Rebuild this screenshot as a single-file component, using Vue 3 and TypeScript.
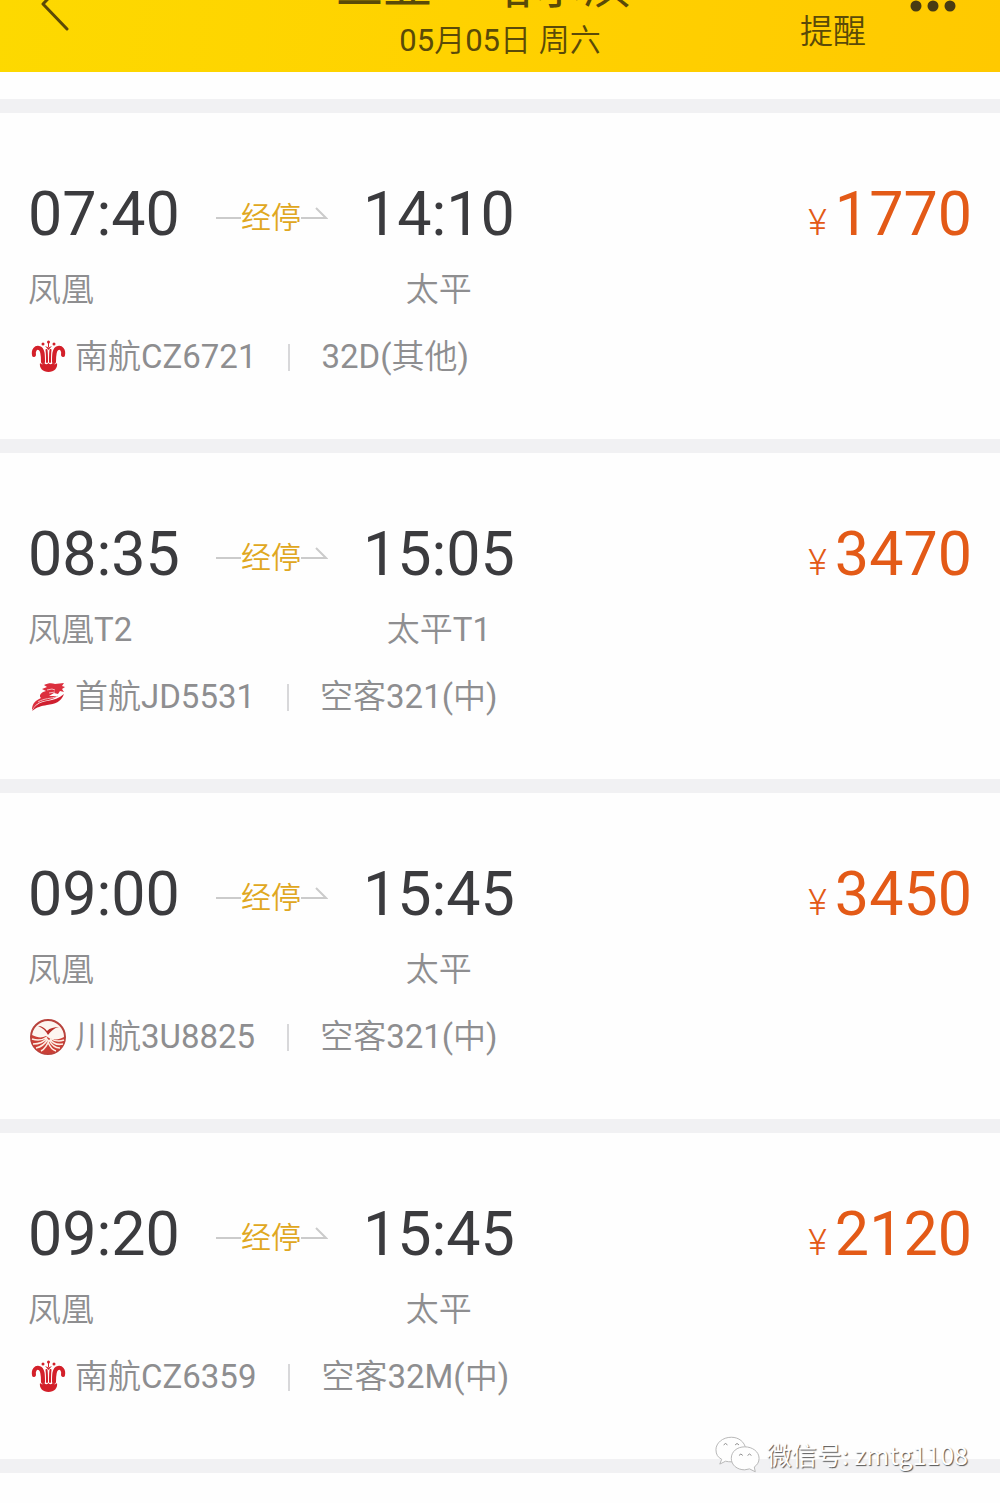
<script setup lang="ts">
type Airline = 'southern' | 'capital' | 'sichuan'

interface Flight {
  depart: string
  arrive: string
  from: string
  to: string
  airline: Airline
  code: string
  plane: string
  price: number
}

const flights: Flight[] = [
  { depart: '07:40', arrive: '14:10', from: '凤凰', to: '太平', airline: 'southern', code: '南航CZ6721', plane: '32D(其他)', price: 1770 },
  { depart: '08:35', arrive: '15:05', from: '凤凰T2', to: '太平T1', airline: 'capital', code: '首航JD5531', plane: '空客321(中)', price: 3470 },
  { depart: '09:00', arrive: '15:45', from: '凤凰', to: '太平', airline: 'sichuan', code: '川航3U8825', plane: '空客321(中)', price: 3450 },
  { depart: '09:20', arrive: '15:45', from: '凤凰', to: '太平', airline: 'southern', code: '南航CZ6359', plane: '空客32M(中)', price: 2120 },
]
</script>

<template>
  <div class="page">
    <header class="bar">
      <button class="back" type="button" aria-label="返回">
        <svg width="32" height="56" viewBox="0 0 32 56" fill="none" stroke="#5c4a06" stroke-width="3" stroke-linecap="round" stroke-linejoin="round">
          <path d="M28 3 4 28l24 25" />
        </svg>
      </button>
      <div class="heading">
        <h1 class="route"><span>三亚</span><span>哈尔滨</span></h1>
        <p class="date">05月05日 周六</p>
      </div>
      <div class="actions">
        <button class="remind" type="button"><span>低价</span><span>提醒</span></button>
        <button class="more" type="button" aria-label="更多">
          <svg width="46" height="12" viewBox="0 0 46 12" fill="#493c12">
            <circle cx="6" cy="6" r="5.5" /><circle cx="23" cy="6" r="5.5" /><circle cx="40" cy="6" r="5.5" />
          </svg>
        </button>
      </div>
    </header>

    <main class="list">
      <article v-for="f in flights" :key="f.code" class="card">
        <div class="summary">
          <div class="times">
            <time class="clock">{{ f.depart }}</time>
            <div class="stopover">
              <i class="dash"></i>
              <span>经停</span>
              <svg width="27" height="14" viewBox="0 0 27 14" fill="none" stroke="#cbcbcb" stroke-width="2">
                <path d="M0 12H25L15 2" />
              </svg>
            </div>
            <time class="clock">{{ f.arrive }}</time>
            <span class="port">{{ f.from }}</span>
            <span class="port arrive">{{ f.to }}</span>
          </div>
          <p class="price"><span class="yen">¥</span>{{ f.price }}</p>
        </div>
        <div class="detail">
          <svg v-if="f.airline === 'southern'" class="logo" viewBox="0 0 38 38">
            <g fill="none" stroke="#d3202a" stroke-linecap="round">
              <path d="M5 17C4 12 7 9 10 10c4 1 4 7 4 14M34 17c1-5-2-8-5-7-4 1-4 7-4 14" stroke-width="4" />
              <path d="M17.500 12c.5 3 .5 8 .5 12M21.500 12c-.5 3-.5 8-.5 12" stroke-width="2" />
            </g>
            <g fill="#d3202a">
              <circle cx="14" cy="6" r="1.5" /><circle cx="19.5" cy="4" r="1.5" /><circle cx="25" cy="6" r="1.5" />
              <path d="M19 4h1v5h-1zM16 8l3.500 4L23 8l-3.500 1.500z" />
              <path d="M11 25q2 2.500 4.250 0 2 2.500 4.250 0 2 2.500 4.250 0 2 2.500 4.250 0c1 5-3 9-8.500 9s-9.500-4-8.500-9z" />
            </g>
          </svg>
          <svg v-else-if="f.airline === 'capital'" class="logo" viewBox="0 0 38 38">
            <path fill="#dc2f3e" d="M13 11l5-2-3-2c4-2 8-2 11-1l9-1-2 3 3 1-3 2 2 3-4-1-2 3-4-1-5 3 8 0c-3 3-8 4-13 5-5 1-8 3-12 9 0-5 2-9 9-12-2-2-1-4 2-6l3-1z" />
            <path fill="#cf1f2f" d="M35 16c-3 8-9 10-17 11-6 1-10 2-15 6 3-6 8-9 15-10 7-1 12-3 17-7z" />
            <path fill="none" stroke="#f7b9bd" d="M18 12l5-1 3 1M20 15l6-1M9 24c6-4 13-3 20-6" />
          </svg>
          <svg v-else class="logo" viewBox="0 0 38 38">
            <circle cx="19" cy="19" r="17" fill="#fdf5f0" stroke="#b8433d" stroke-width="2" />
            <path fill="#b92f2a" d="M9 8c4 0 7 2 9 5 3-3 7-4 12-4-5 1-8 4-11 8-2-4-5-7-10-9z" />
            <path fill="#cb3f36" d="M3 17c6 3 10 3 14 1l3 2c5 2 10 2 15-1 1 5-1 9-4 12-7 6-18 6-24 0-3-3-5-8-4-14z" />
            <g fill="none" stroke="#fdeee4" stroke-width="1.5">
              <path d="M3 21c6 2 11 1 15-2M4 26c6 0 11-2 14-6M7 30c5-1 9-4 12-9M12 33c4-2 6-5 8-11M21 20c4 3 9 4 14 2M21 21c3 5 8 6 13 5M20 22c3 6 6 8 11 8M19 24c2 5 4 8 8 9" />
            </g>
          </svg>
          <span>{{ f.code }}</span>
          <i class="rule"></i>
          <span>{{ f.plane }}</span>
        </div>
      </article>
    </main>

    <p class="watermark">
      <svg width="46" height="37" viewBox="0 0 48 38" fill="#fefefe" stroke="#b5b5b5" stroke-width="1">
        <path d="M17 1C8 1 1 7 1 14c0 5 2 8 6 10l-2 5 6-3c4 1 9 1 13-1 6-2 9-7 8-12C31 6 25 1 17 1z" />
        <path d="M31 11c-8 0-14 5-14 12s6 12 14 12l5-1 6 3-1-5c3-2 5-5 5-9 0-7-7-12-15-12z" />
        <path fill="none" stroke="#888" d="M9 9q2-3 4 0M21 9q2-3 4 0M25 20q2-3 4 0M34 20q2-3 4 0" />
      </svg>
      微信号: zmtg1108
    </p>
  </div>
</template>

<style>
body {
  margin: 0;
  background: #fefefe;
}
</style>

<style scoped>
.page {
  position: relative;
  min-height: 100vh;
  box-sizing: border-box;
  padding-bottom: 28px;
  overflow: hidden;
  background: #fefefe;
  color: #8e8e90;
  font-family: Roboto, "Noto Sans CJK SC DemiLight", "Noto Sans CJK SC", sans-serif;
}
h1, p {
  margin: 0;
  font-weight: 400;
}
button {
  padding: 0;
  border: 0;
  background: none;
  color: inherit;
  font: inherit;
}
svg {
  display: block;
  flex: none;
}
.bar {
  display: grid;
  grid-template-columns: 1fr auto 1fr;
  grid-template-rows: 72px;
  align-items: end;
  overflow: hidden;
  background: linear-gradient(100deg, #fdd900, #ffd200 45%, #ffc900);
  color: #5a4a08;
}
.back {
  justify-self: start;
  margin: 0 0 40px 39px;
}
.heading {
  display: flex;
  flex-direction: column;
  align-items: center;
  padding-bottom: 11px;
}
.route {
  display: flex;
  gap: 55px;
  margin: 0 34px 6px 0;
  font-family: Roboto, "Noto Sans CJK SC", sans-serif;
  font-size: 48px;
  line-height: 56px;
  white-space: nowrap;
}
.date {
  font-size: 31px;
  line-height: 40px;
}
.actions {
  display: flex;
  justify-content: flex-end;
  align-items: flex-end;
  gap: 44px;
  padding-right: 44px;
}
.remind {
  display: flex;
  flex-direction: column;
  gap: 3px;
  margin-bottom: 18px;
  font-size: 33px;
  line-height: 44px;
}
.more {
  margin-bottom: 60px;
}
.list {
  margin-top: 27px;
  border-bottom: 14px solid #f1f1f3;
}
.card {
  padding: 65px 28px 58px;
  border-top: 14px solid #f1f1f3;
}
.summary {
  display: flex;
  justify-content: space-between;
}
.times {
  display: grid;
  grid-template-columns: auto auto auto;
  row-gap: 16px;
}
.clock {
  color: #3b3b3e;
  font-size: 61px;
  line-height: 72px;
}
.stopover {
  display: flex;
  align-items: center;
  margin: 8px 35px 0 36px;
  color: #e0a720;
  font-size: 30px;
  line-height: 40px;
}
.stopover svg {
  margin-bottom: 10px;
}
.dash {
  width: 25px;
  height: 2px;
  background: #cbcbcb;
}
.port {
  font-size: 33px;
  line-height: 48px;
}
.arrive {
  grid-column: 3;
  text-align: center;
}
.price {
  color: #e35a17;
  font-size: 61px;
  line-height: 72px;
}
.yen {
  margin-right: 8px;
  font-size: 36px;
  font-weight: 300;
}
.detail {
  display: flex;
  align-items: center;
  margin-top: 19px;
  font-size: 33px;
  line-height: 48px;
}
.logo {
  width: 38px;
  height: 38px;
  margin: 0 8px 0 1px;
}
.rule {
  width: 2px;
  height: 27px;
  margin: 0 31px 0 32px;
  background: #d8d8da;
}
.watermark {
  position: absolute;
  right: 32px;
  bottom: 29px;
  display: flex;
  align-items: center;
  gap: 6px;
  color: #fff;
  font-family: "Noto Sans CJK SC", sans-serif;
  font-size: 25px;
  line-height: 40px;
  text-shadow: 1px 1px 1px #555;
}
</style>
